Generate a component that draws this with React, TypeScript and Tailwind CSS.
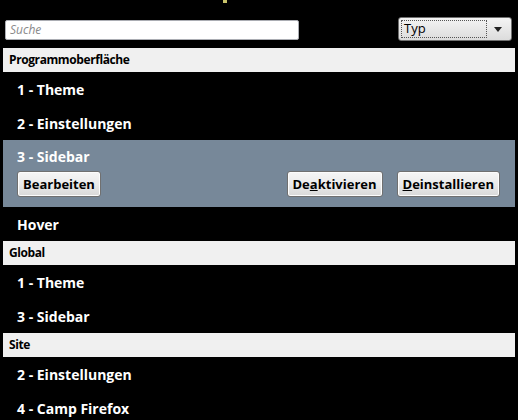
import React from 'react';

type Item = { label: string; selected?: boolean };
type Group = { title: string; items: Item[] };

const groups: Group[] = [
  {
    title: 'Programmoberfläche',
    items: [
      { label: '1 - Theme' },
      { label: '2 - Einstellungen' },
      { label: '3 - Sidebar', selected: true },
      { label: 'Hover' },
    ],
  },
  {
    title: 'Global',
    items: [{ label: '1 - Theme' }, { label: '3 - Sidebar' }],
  },
  {
    title: 'Site',
    items: [{ label: '2 - Einstellungen' }, { label: '4 - Camp Firefox' }],
  },
];

function Btn({ children }: { children: React.ReactNode }) {
  return (
    <button className="h-[26px] px-[5px] rounded-[3px] border border-[#707070] bg-gradient-to-b from-[#f6f6f6] via-[#ebebeb] to-[#d8d8d8] text-[13px] font-bold text-black leading-none shadow-[inset_0_0_0_1px_#fcfcfc]">
      {children}
    </button>
  );
}

function Row({ item }: { item: Item }) {
  if (item.selected) {
    return (
      <div className="h-[67px] bg-[#778899] pl-[14px] pr-[15px] pt-[6px]">
        <div className="h-[22px] text-[14px] font-bold text-white leading-[22px]">{item.label}</div>
        <div className="mt-[3px] flex items-center">
          <Btn>Bearbeiten</Btn>
          <div className="flex-1" />
          <Btn>
            De<span className="underline">a</span>ktivieren
          </Btn>
          <div className="w-[14px]" />
          <Btn>
            <span className="underline">D</span>einstallieren
          </Btn>
        </div>
      </div>
    );
  }
  return (
    <div className="h-[34px] flex items-center pl-[14px] text-[14px] font-bold text-white">
      {item.label}
    </div>
  );
}

export default function App() {
  return (
    <div className="h-[420px] overflow-hidden bg-black font-['Open_Sans',sans-serif]">
      <div className="h-[17px] pl-[223px]">
        <div className="w-[4px] h-[3px] bg-[#c9c36a]" />
      </div>
      <div className="h-[31px] flex items-start pl-[5px] pr-[6px]">
        <div className="mt-[3px] w-[294px] h-[20px] bg-white border border-[#abadb3] rounded-[2px] flex items-center pl-[4px]">
          <span className="text-[12px] italic text-[#8a8a8a]">Suche</span>
        </div>
        <div className="flex-1" />
        <div className="w-[114px] h-[24px] rounded-[3px] border border-[#707070] bg-gradient-to-b from-[#f4f4f4] to-[#dcdcdc] flex items-center p-[2px]">
          <div className="flex-1 h-full border border-dotted border-[#555] flex items-center pl-[2px] text-[13px] text-black">
            Typ
          </div>
          <div className="w-[22px] flex justify-center">
            <svg width="8" height="5" viewBox="0 0 8 5">
              <path d="M0 0h8L4 5z" fill="#222" />
            </svg>
          </div>
        </div>
      </div>
      <div className="mx-[3px]">
        {groups.map((g) => (
          <div key={g.title}>
            <div className="h-[24px] bg-[#f0f0f0] flex items-center pl-[6px] text-[12px] tracking-[-0.4px] font-bold text-black">
              {g.title}
            </div>
            {g.items.map((it, i) => (
              <Row key={i} item={it} />
            ))}
          </div>
        ))}
      </div>
    </div>
  );
}
